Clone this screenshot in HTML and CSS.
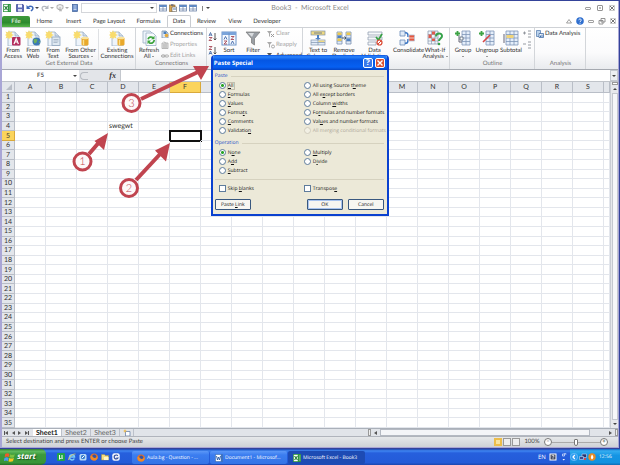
FILE: index.html
```html
<!DOCTYPE html>
<html lang="en">
<head>
<meta charset="utf-8">
<title>Book3 - Microsoft Excel</title>
<link rel="stylesheet" href="styles.css">
</head>
<body>
<svg class="defs" aria-hidden="true">
  <symbol id="page" viewBox="0 0 16 16"><path d="M3 2h7l4 4v10H3z" fill="#eef4fb" stroke="#9aaec4" stroke-width=".8"/><path d="M10 2v4h4" fill="#cfdcea" stroke="#9aaec4" stroke-width=".7"/><path d="M4 0l1 2.500 2.500-1-1 2.500L9 5 6.500 6l1 2.500-2.500-1L4 9.500 3 7.500.5 8.500l1-2.500L0 5l1.500-1-1-2.500 2.500 1z" fill="#f9dc6c"/></symbol>
  <symbol id="access" viewBox="0 0 16 16"><use href="#page"/><rect x="7" y="7" width="8.500" height="8.500" rx="1" fill="#b5305f"/><path d="M9 14l2.200-5.500 2.200 5.500M9.700 12h3" fill="none" stroke="#fff" stroke-width="1.200"/></symbol>
  <symbol id="web" viewBox="0 0 16 16"><use href="#page"/><circle cx="11.500" cy="11.500" r="4" fill="#3b78b5"/><path d="M9.500 8.500l3 1-1 3-2 1-1-3zM13.500 11.500l2 0-1 2z" fill="#6fb25c"/></symbol>
  <symbol id="text" viewBox="0 0 16 16"><use href="#page"/><rect x="7" y="7" width="8" height="8.500" fill="#dfe9f2" stroke="#8ea5bd" stroke-width=".8"/><path d="M8.500 9.500h5M8.500 11h5M8.500 12.500h4" stroke="#9aaabd" stroke-width=".7"/></symbol>
  <symbol id="drum" viewBox="0 0 16 16"><path d="M8.500 8v6.500c0 1.600 7 1.600 7 0V8" fill="#e9a92c"/><ellipse cx="12" cy="8" rx="3.500" ry="1.300" fill="#fbe39a"/><path d="M10.500 10v5" stroke="#fbe08a" stroke-width="1.400"/></symbol>
  <symbol id="other" viewBox="0 0 16 16"><use href="#page"/><use href="#drum"/></symbol>
  <symbol id="refresh" viewBox="0 0 16 16"><path d="M2 1h7l3 3v9H2z" fill="#eef4fb" stroke="#9aaec4" stroke-width=".8"/><path d="M5 3h7l3 3v9.500H5z" fill="#f7fafd" stroke="#9aaec4" stroke-width=".8"/><path d="M7 9.200a3.200 3.200 0 0 1 5-1.500M13.200 10a3.200 3.200 0 0 1-5.200 2.500" fill="none" stroke="#3ba33b" stroke-width="1.700"/><path d="M13.500 5.800v3.500h-3.500zM6.500 14v-3.500H10z" fill="#3ba33b"/></symbol>
  <symbol id="conn" viewBox="0 0 8 8"><path d="M1 1h4l2 2v5H1z" fill="#dce8f5" stroke="#7790ad" stroke-width=".8"/><path d="M2.500 1.500h3v2.500h-3z" fill="#4d80ba"/><circle cx="5.500" cy="5.500" r="1.800" fill="#e5a93a"/></symbol>
  <symbol id="props" viewBox="0 0 8 8"><path d="M1 2h6v5.500H1z" fill="#e4e4e4" stroke="#aaa" stroke-width=".8"/><path d="M2 4h4M2 6h4M3 .5l2 2" stroke="#999" stroke-width=".8"/></symbol>
  <symbol id="links" viewBox="0 0 8 8"><rect x=".5" y="3" width="3.500" height="2" rx="1" fill="none" stroke="#999"/><rect x="4" y="3" width="3.500" height="2" rx="1" fill="none" stroke="#aaa"/></symbol>
  <symbol id="az" viewBox="0 0 9 9"><path d="M1 4L2.500.5 4 4M1.500 3h2" fill="none" stroke="#466ba5" stroke-width=".9"/><path d="M1 5.500h3L1 8.500h3" fill="none" stroke="#a84a57" stroke-width=".9"/><path d="M7 1v7M5.700 6.500L7 8l1.300-1.500" fill="none" stroke="#444" stroke-width=".9"/></symbol>
  <symbol id="za" viewBox="0 0 9 9"><path d="M1 8.500L2.500 5 4 8.500M1.500 7.500h2" fill="none" stroke="#466ba5" stroke-width=".9"/><path d="M1 .5h3L1 3.500h3" fill="none" stroke="#a84a57" stroke-width=".9"/><path d="M7 1v7M5.700 6.500L7 8l1.300-1.500" fill="none" stroke="#444" stroke-width=".9"/></symbol>
  <symbol id="sort" viewBox="0 0 16 16"><rect x="1" y="2" width="14" height="13" fill="#f5f9fe" stroke="#6d94c9"/><path d="M1 2h14v3H1z" fill="#7ba4da"/><path d="M8 3v12" stroke="#6d94c9"/><path d="M3 9.500l1.500-3 1.500 3M10 14l1.500-3 1.500 3" fill="none" stroke="#4268a8" stroke-width=".9"/><path d="M10 6.500h3l-3 3h3M3 11h3l-3 3h3" fill="none" stroke="#a84a57" stroke-width=".9"/></symbol>
  <symbol id="funnel" viewBox="0 0 16 16"><path d="M1 2h14L9.500 8.500V15L6.500 13V8.500z" fill="#999ea4" stroke="#777" stroke-width=".7"/><path d="M3 3h6L7 7z" fill="#d8dbde"/></symbol>
  <symbol id="clear" viewBox="0 0 8 8"><path d="M0 1h5L3 3.500V7L2 6V3.500z" fill="#aaa"/><path d="M4 4l3 3M7 4L4 7" stroke="#999"/></symbol>
  <symbol id="reapply" viewBox="0 0 8 8"><path d="M0 1h5L3 3.500V7L2 6V3.500z" fill="#aaa"/><circle cx="6" cy="5.500" r="1.500" fill="none" stroke="#aaa"/></symbol>
  <symbol id="advanced" viewBox="0 0 8 8"><path d="M0 1h5L3 3.500V7L2 6V3.500z" fill="#555"/><path d="M5 7l2-3" stroke="#3c6cae"/></symbol>
  <symbol id="columns" viewBox="0 0 16 16"><rect x="1" y="1" width="14" height="4" fill="#efd981" stroke="#7f93ad" stroke-width=".7"/><path d="M4 3h8" stroke="#6d7f98"/><path d="M7 5h2v3h2L8 10 5 8h2z" fill="#4a7fc4"/><rect x="1" y="10" width="14" height="5" fill="#e2ecf8" stroke="#7f93ad" stroke-width=".7"/><path d="M1 12.500h14M8 10v5" stroke="#7f93ad" stroke-width=".7"/><path d="M8.500 10.500h6v1.500h-6z" fill="#efd981"/></symbol>
  <symbol id="remove" viewBox="0 0 16 16"><path d="M1 2h5v12H1zM10 2h5v12h-5z" fill="#e2ecf8" stroke="#7890b0" stroke-width=".8"/><path d="M1 5h5M1 8h5M1 11h5M10 5h5M10 8h5M10 11h5" stroke="#7890b0" stroke-width=".8"/><path d="M1.500 2.500h4V5h-4zM10.500 2.500h4V5h-4zM1.500 8.500h4V11h-4z" fill="#ecc94e"/><path d="M1.500 5.500h4V8h-4zM10.500 8.500h4V11h-4z" fill="#4f80c0"/><path d="M6 8h4M8.500 6.500L10 8 8.500 9.500" stroke="#456" fill="none"/></symbol>
  <symbol id="valid" viewBox="0 0 16 16"><path d="M1 2h14v3H1zM1 7h14v3H1zM1 12h8v3H1z" fill="#f6f8fa" stroke="#8697aa" stroke-width=".7"/><path d="M9 7l2.500 3L15 4" fill="none" stroke="#36a044" stroke-width="1.700"/><circle cx="12.500" cy="12.500" r="2.500" fill="#fff" stroke="#d9452f" stroke-width="1.200"/><path d="M11 14l3-3" stroke="#d9452f"/></symbol>
  <symbol id="consol" viewBox="0 0 16 16"><path d="M1 1h5v5H1zM1 10h5v5H1z" fill="#dfeaf7" stroke="#6b8cb8" stroke-width=".8"/><path d="M6 3c3-1 3 2 3 4M6 13c3 1 3-2 3-4" fill="none" stroke="#3a75c4" stroke-width="1.500"/><path d="M10 5h5.500v6H10z" fill="#e5573f" stroke="#b5c4d8" stroke-width=".8"/><path d="M10 8h5.500" stroke="#fff" stroke-width=".7"/></symbol>
  <symbol id="whatif" viewBox="0 0 16 16"><path d="M1 1h10v13H1z" fill="#f3f7fc" stroke="#8d9db3" stroke-width=".8"/><path d="M1 4.500h10M1 8h10M1 11h10M4.500 1v13M8 1v13" stroke="#8d9db3" stroke-width=".7"/><path d="M1.500 4.500h3V8h-3zM5 1.500h3v3H5zM5 8.500h3V11H5z" fill="#dd5c4c"/><path d="M9 6.500c0-4 6-4 6-.5 0 2.500-3 2.500-3 5" fill="none" stroke="#35a249" stroke-width="2"/><circle cx="12" cy="14" r="1.300" fill="#35a249"/></symbol>
  <symbol id="group" viewBox="0 0 16 16"><path d="M7 1h8v14H7z" fill="#e5eefa" stroke="#7d96b8" stroke-width=".8"/><path d="M7 4.500h8M7 8h8M7 11.500h8M11 1v14" stroke="#7d96b8" stroke-width=".8"/><path d="M4 5v7h3" fill="none" stroke="#667"/><path d="M0 3.500h5M2.500 1v5" stroke="#3da345" stroke-width="1.800"/><path d="M5 7h3v3H5z" fill="#fff" stroke="#567" stroke-width=".8"/></symbol>
  <symbol id="ungroup" viewBox="0 0 16 16"><path d="M7 1h8v14H7z" fill="#e5eefa" stroke="#7d96b8" stroke-width=".8"/><path d="M7 4.500h8M7 8h8M7 11.500h8M11 1v14" stroke="#7d96b8" stroke-width=".8"/><path d="M0 3.500h5M2.500 1v5" stroke="#3da345" stroke-width="1.800"/><path d="M4 12l7-7" stroke="#d74343" stroke-width="1.600"/></symbol>
  <symbol id="subtotal" viewBox="0 0 16 16"><path d="M3 1h12v14H3z" fill="#e5eefa" stroke="#7d96b8" stroke-width=".8"/><path d="M3 4.500h12M3 8h12M3 11.500h12M7 1v14M11 1v14" stroke="#7d96b8" stroke-width=".8"/><path d="M3.500 5h7v3h-7z" fill="#f0d47a"/><path d="M1 4v9" stroke="#667"/></symbol>
  <symbol id="detail" viewBox="0 0 8 8"><path d="M0 3h3M1.500 1.500v3M5 1h3M5 4h3M5 7h3" stroke="#8b9097" stroke-width=".9"/></symbol>
  <symbol id="hide" viewBox="0 0 8 8"><path d="M0 3h3M5 1h3M5 4h3M5 7h3" stroke="#8b9097" stroke-width=".9"/></symbol>
  <symbol id="analysis" viewBox="0 0 8 8"><path d="M.5.500h4v6h-4z" fill="#bcd3ec" stroke="#5d83b4" stroke-width=".8"/><path d="M3 3.500h4.500v4H3z" fill="#fff" stroke="#456fa6" stroke-width=".8"/><path d="M4.500 7V5.500M6 7V4.500" stroke="#3d6fb0"/></symbol>
  <symbol id="xl" viewBox="0 0 8 8"><rect width="8" height="8" rx=".6" fill="#2f9440"/><path d="M.8.800h4v6.400h-4z" fill="#fff"/><path d="M1.500 2l3 4M4.500 2l-3 4" stroke="#258036" stroke-width="1.200"/><path d="M6 2h1.500M6 4h1.500M6 6h1.500" stroke="#c9e7cc" stroke-width=".7"/></symbol>
  <symbol id="wd" viewBox="0 0 8 8"><rect width="8" height="8" rx=".6" fill="#3f73c0"/><path d="M.8.800h5v6.400h-5z" fill="#fff"/><path d="M1.500 2l1 4 1-3 1 3 1-4" fill="none" stroke="#285aa8" stroke-width=".9"/></symbol>
  <symbol id="save" viewBox="0 0 8 8"><path d="M.5.500h6.500l.5.500v6.500h-7z" fill="#5b69b8" stroke="#38458f" stroke-width=".7"/><path d="M2 .5h4v3H2z" fill="#f5f7ff"/><path d="M2 5h4v2.500H2z" fill="#cdd3e8"/></symbol>
  <symbol id="undo" viewBox="0 0 8 8"><path d="M2 3.500C5 1 8 3 6.500 5.500L5 7" fill="none" stroke="#3c68b8" stroke-width="1.500"/><path d="M.5 1v4h4z" fill="#3c68b8"/></symbol>
  <symbol id="redo" viewBox="0 0 8 8"><path d="M6 3.500C3 1 0 3 1.500 5.500L3 7" fill="none" stroke="#b5b9c0" stroke-width="1.300"/><path d="M7.500 1v4h-4z" fill="#b5b9c0"/></symbol>
  <symbol id="gear" viewBox="0 0 8 8"><path d="M4 .5l3 1v3L4 6 1 4.500v-3zM4 3v4.500M2 5l4 2" fill="#eee" stroke="#aaa" stroke-width=".9"/></symbol>
  <symbol id="book" viewBox="0 0 8 8"><rect x="1.500" y=".5" width="5" height="7" fill="#6388c6" stroke="#3d5e98" stroke-width=".7"/><path d="M2.500 2h3M2.500 4h3M2.500 5.500h3" stroke="#dfe9f7" stroke-width=".8"/></symbol>
  <symbol id="grid" viewBox="0 0 8 8"><rect x=".5" y="1" width="7" height="6" fill="#fff" stroke="#6b83a8" stroke-width=".8"/><path d="M.5 1h7v2h-7z" fill="#5e8bc8"/><path d="M4 1v6M.5 5h7" stroke="#6b83a8" stroke-width=".7"/></symbol>
  <symbol id="paste" viewBox="0 0 8 8"><rect x=".5" y="1" width="5.500" height="6.500" fill="#d6a453" stroke="#87672f" stroke-width=".6"/><path d="M2 .3h2.500v1.500H2z" fill="#667"/><path d="M3 3h4.500v4.700H3z" fill="#fff" stroke="#555" stroke-width=".6"/><path d="M4 5h3" stroke="#57a"/></symbol>
  <symbol id="newsheet" viewBox="0 0 8 8"><path d="M2.500 2.500H7v4.500H2.500z" fill="#fff" stroke="#6b83a8" stroke-width=".8"/><path d="M2 0l.6 1.400L4 2l-1.400.6L2 4l-.6-1.400L0 2l1.400-.6z" fill="#efb63c"/></symbol>
  <symbol id="winflag" viewBox="0 0 10 10"><path d="M1 2.500c1.500-1 2.500-.6 3.500 0L4 5c-1-.6-2-.6-3.500.200z" fill="#ef5a2b"/><path d="M5 2.700c1.200.6 2.400.6 4 0L8.300 5.200c-1.300.6-2.600.5-3.800 0z" fill="#7cc243"/><path d="M.4 5.800c1.400-.8 2.400-.7 3.500 0L3.200 8.500c-1-.7-2-.7-3.400 0z" fill="#4a9bf0"/><path d="M4.400 5.900c1.200.6 2.400.6 3.800 0L7.500 8.600c-1.200.5-2.500.6-3.800 0z" fill="#fbc61f"/></symbol>
  <symbol id="fox" viewBox="0 0 8 8"><circle cx="4" cy="4" r="3.600" fill="#e2702a"/><circle cx="4.200" cy="3.600" r="2" fill="#3154a8"/><path d="M.5 3c2-1 2 2 4 2s3-1 3-3c1 4-1 5.500-3.500 5.500S0 6 .5 3z" fill="#f08a27"/></symbol>
  <symbol id="ie" viewBox="0 0 8 8"><path d="M1.500 4h5C6.500 1 2 1 1.500 4s3.500 4 4.800 1.500" fill="none" stroke="#7ccaf7" stroke-width="1.500"/><path d="M.5 7C0 4.500 5 .5 7.500 1" fill="none" stroke="#f1c84b" stroke-width=".7"/></symbol>
  <symbol id="mu" viewBox="0 0 8 8"><rect width="8" height="8" rx="1" fill="#21a548"/><path d="M2.500 6.500V2M2.500 5c1 1 2.500.5 2.500-.5V2M5.200 5.300h.8" fill="none" stroke="#fff" stroke-width="1"/></symbol>
  <symbol id="globe" viewBox="0 0 8 8"><rect x=".5" y="1" width="7" height="6.500" rx="1.500" fill="#bcdcf7"/><circle cx="4" cy="4" r="2.200" fill="#3b7fd0"/><path d="M3 5l2.500-2.500" stroke="#fff"/></symbol>
  <symbol id="folder" viewBox="0 0 8 8"><path d="M.5 1.500h3l.7 1h3.300v4.500h-7z" fill="#f4dd80" stroke="#a98f3c" stroke-width=".5"/><path d="M3 4h4.500v3H3z" fill="#fff6c7"/></symbol>
  <symbol id="gee" viewBox="0 0 8 8"><rect x=".3" y=".3" width="7.400" height="7.400" rx="2" fill="#f3f6fb"/><path d="M5.800 2.800a2 2 0 1 0 0 2.400H4.300" fill="none" stroke="#344f9e" stroke-width="1.200"/></symbol>
  <symbol id="help-box" viewBox="0 0 8 8"><rect x=".5" y=".5" width="7" height="7" fill="#fff"/><rect x="1.500" y="1.500" width="5" height="5" fill="#444a60"/><path d="M3 3.200c0-1.300 2-1.200 2-.1 0 .7-1 .7-1 1.600M4 5.300v.7" fill="none" stroke="#fff" stroke-width=".8"/></symbol>
  <symbol id="dots" viewBox="0 0 8 8"><path d="M2.500 1h2v2h-2zM4 .3h1.800v1.500" fill="none" stroke="#dfe9ff" stroke-width=".7"/><path d="M2.500 6h2.500L3.700 7.500z" fill="#fff"/></symbol>
  <symbol id="chevron" viewBox="0 0 8 8"><circle cx="4" cy="4" r="3.700" fill="#2f9cf0" stroke="#8fd0ff" stroke-width=".5"/><path d="M4.800 2L3 4l1.800 2" fill="none" stroke="#fff" stroke-width="1.200"/></symbol>
  <symbol id="net" viewBox="0 0 8 8"><path d="M3 1h4.500v3.500H3z" fill="#26356f" stroke="#c5d5f3" stroke-width=".6"/><path d="M.5 3.500h4v3h-4z" fill="#3a4a92" stroke="#c5d5f3" stroke-width=".6"/><path d="M5 5l2 2M7 5L5 7" stroke="#d84a4a"/></symbol>
  <symbol id="flame" viewBox="0 0 8 8"><circle cx="4" cy="4" r="3.700" fill="#e98b22"/><path d="M4 1.500c2 2 1.500 4 0 5-1.500-1-1.500-3 0-5z" fill="#fff"/></symbol>
  <symbol id="min" viewBox="0 0 8 8"><rect x="1.500" y="3.500" width="5" height="2" rx=".5" fill="#fff" stroke="#888" stroke-width=".8"/></symbol>
  <symbol id="max" viewBox="0 0 8 8"><rect x="1.500" y="1.500" width="5" height="5" rx=".5" fill="#fff" stroke="#888" stroke-width=".9"/><rect x="3.300" y="3.300" width="1.400" height="1.400" fill="#777"/></symbol>
  <symbol id="restore" viewBox="0 0 8 8"><path d="M3 1.500h4v3.500H3zM1 3.500h4V7H1z" fill="#fff" stroke="#888" stroke-width=".9"/></symbol>
  <symbol id="close" viewBox="0 0 8 8"><path d="M1.500 1.500h5v5h-5z" fill="none" stroke="#aaa" stroke-width=".6"/><path d="M2 2l4 4M6 2L2 6" stroke="#777" stroke-width="1"/></symbol>
  <symbol id="caret" viewBox="0 0 8 8"><path d="M4 2.500L6.500 6h-5z" fill="#fff" stroke="#888" stroke-width=".8"/></symbol>
  <symbol id="help" viewBox="0 0 8 8"><circle cx="4" cy="4" r="3.800" fill="#2f6fcf"/><path d="M2.800 3.200c0-1.700 2.500-1.600 2.500-.1 0 .9-1.300.9-1.300 2" fill="none" stroke="#fff" stroke-width=".9"/><circle cx="4" cy="6.200" r=".5" fill="#fff"/></symbol>
</svg>

<main class="window">
  <header class="titlebar">
    <div class="quick">
      <button aria-label="Excel"><svg class="i8"><use href="#xl"/></svg></button>
      <button class="w-save" aria-label="Save"><svg class="i8"><use href="#save"/></svg></button>
      <button class="w-menu" aria-label="Undo"><svg class="i8"><use href="#undo"/></svg><i class="down"></i></button>
      <button class="w-menu" aria-label="Redo"><svg class="i8"><use href="#redo"/></svg><i class="down pale"></i></button>
      <button class="w-menu" aria-label="Trace"><svg class="i8"><use href="#gear"/></svg><i class="down pale"></i></button>
      <button aria-label="Calculator"><svg class="i8"><use href="#book"/></svg></button>
      <div class="quick-combo"><select aria-label="Style"><option></option></select><i class="down"></i></div>
      <button aria-label="Properties"><svg class="i8"><use href="#grid"/></svg></button>
      <button aria-label="Paste"><svg class="i8"><use href="#paste"/></svg></button>
      <button aria-label="Form"><svg class="i8"><use href="#grid"/></svg></button>
      <button aria-label="View"><svg class="i8"><use href="#grid"/></svg></button>
      <button class="w-more" aria-label="Customize"><i class="down"></i></button>
    </div>
    <h1>Book3 &nbsp;-&nbsp; Microsoft Excel</h1>
    <div class="winbtns">
      <button aria-label="Minimize"><svg class="i8"><use href="#min"/></svg></button>
      <button aria-label="Maximize"><svg class="i8"><use href="#max"/></svg></button>
      <button aria-label="Close"><svg class="i8"><use href="#close"/></svg></button>
    </div>
  </header>

  <nav class="tabs">
    <button class="file">File</button>
    <button class="t-home">Home</button>
    <button class="t-insert">Insert</button>
    <button class="t-layout">Page Layout</button>
    <button class="t-formulas">Formulas</button>
    <button class="t-data active">Data</button>
    <button class="t-review">Review</button>
    <button class="t-view">View</button>
    <button class="t-dev">Developer</button>
    <div class="docbtns">
      <button aria-label="Collapse ribbon"><svg class="i8"><use href="#caret"/></svg></button>
      <button aria-label="Help"><svg class="i8"><use href="#help"/></svg></button>
      <button aria-label="Minimize book"><svg class="i8"><use href="#min"/></svg></button>
      <button aria-label="Restore book"><svg class="i8"><use href="#restore"/></svg></button>
      <button aria-label="Close book"><svg class="i8"><use href="#close"/></svg></button>
    </div>
  </nav>

  <section class="ribbon">
    <div class="group">
      <div class="tools">
        <button class="big b20"><svg class="i16"><use href="#access"/></svg>From<br>Access</button>
        <button class="big b20"><svg class="i16"><use href="#web"/></svg>From<br>Web</button>
        <button class="big b20"><svg class="i16"><use href="#text"/></svg>From<br>Text</button>
        <button class="big b34"><svg class="i16"><use href="#other"/></svg>From Other<br><span>Sources <i class="down"></i></span></button>
        <button class="big b38 split"><svg class="i16"><use href="#other"/></svg>Existing<br>Connections</button>
      </div>
      <h2>Get External Data</h2>
    </div>
    <div class="group">
      <div class="tools">
        <button class="big b24"><svg class="i16"><use href="#refresh"/></svg>Refresh<br><span>All <i class="down"></i></span></button>
        <div class="list b46">
          <button><svg class="i8"><use href="#conn"/></svg>Connections</button>
          <button disabled><svg class="i8"><use href="#props"/></svg>Properties</button>
          <button disabled><svg class="i8"><use href="#links"/></svg>Edit Links</button>
        </div>
      </div>
      <h2>Connections</h2>
    </div>
    <div class="group">
      <div class="tools">
        <div class="list b12 sorts">
          <button aria-label="Sort A to Z"><svg class="i9"><use href="#az"/></svg></button>
          <button aria-label="Sort Z to A"><svg class="i9"><use href="#za"/></svg></button>
        </div>
        <button class="big b20"><svg class="i16"><use href="#sort"/></svg>Sort</button>
        <button class="big b28"><svg class="i16"><use href="#funnel"/></svg>Filter</button>
        <div class="list b34">
          <button disabled><svg class="i8"><use href="#clear"/></svg>Clear</button>
          <button disabled><svg class="i8"><use href="#reapply"/></svg>Reapply</button>
          <button><svg class="i8"><use href="#advanced"/></svg>Advanced</button>
        </div>
      </div>
    </div>
    <div class="group">
      <div class="tools">
        <button class="big b28"><svg class="i16"><use href="#columns"/></svg>Text to<br>Columns</button>
        <button class="big b24"><svg class="i16"><use href="#remove"/></svg>Remove<br>Duplicates</button>
        <button class="big b38"><svg class="i16"><use href="#valid"/></svg>Data<br>Validation</button>
        <button class="big b28"><svg class="i16"><use href="#consol"/></svg>Consolidate</button>
        <button class="big b34"><svg class="i16"><use href="#whatif"/></svg>What-If<br><span>Analysis <i class="down"></i></span></button>
      </div>
    </div>
    <div class="group">
      <div class="tools">
        <button class="big b24"><svg class="i16"><use href="#group"/></svg>Group<br><i class="down"></i></button>
        <button class="big b24"><svg class="i16"><use href="#ungroup"/></svg>Ungroup<br><i class="down"></i></button>
        <button class="big b24"><svg class="i16"><use href="#subtotal"/></svg>Subtotal</button>
        <div class="list b12">
          <button disabled aria-label="Show detail"><svg class="i8"><use href="#detail"/></svg></button>
          <button disabled aria-label="Hide detail"><svg class="i8"><use href="#hide"/></svg></button>
        </div>
      </div>
      <h2>Outline</h2>
    </div>
    <div class="group">
      <div class="tools">
        <div class="list b50">
          <button><svg class="i8"><use href="#analysis"/></svg>Data Analysis</button>
        </div>
      </div>
      <h2>Analysis</h2>
    </div>
  </section>

  <section class="formula">
    <button class="namebox">F5<i class="down"></i></button>
    <div class="fx"><i class="knob"></i><em>fx</em></div>
    <input aria-label="Formula">
    <button class="expand" aria-label="Expand formula bar"><i class="down"></i></button>
  </section>

  <section class="work">
    <table class="sheet" aria-label="Sheet1"><thead></thead><tbody></tbody></table>
    <div class="vscroll">
      <i class="splitter"></i>
      <button aria-label="Scroll up"><i class="up"></i></button>
      <div class="thumb"></div>
      <button class="last" aria-label="Scroll down"><i class="down"></i></button>
    </div>
  </section>

  <section class="sheets">
    <div class="sheet-nav">
      <button aria-label="First sheet"><i class="bar"></i><i class="left"></i></button>
      <button aria-label="Previous sheet"><i class="left"></i></button>
      <button aria-label="Next sheet"><i class="right"></i></button>
      <button aria-label="Last sheet"><i class="right"></i><i class="bar"></i></button>
    </div>
    <div class="sheet-tabs">
      <button class="active">Sheet1</button>
      <button>Sheet2</button>
      <button>Sheet3</button>
      <button class="new" aria-label="Insert sheet"><svg class="i8"><use href="#newsheet"/></svg></button>
    </div>
    <div class="hscroll">
      <i class="grip"></i>
      <button aria-label="Scroll left"><i class="left"></i></button>
      <div class="track"><div class="thumb"></div></div>
      <button aria-label="Scroll right"><i class="right"></i></button>
      <i class="grip"></i>
    </div>
  </section>

  <footer class="status">
    <span>Select destination and press ENTER or choose Paste</span>
    <div class="views">
      <button class="active" aria-label="Normal"></button>
      <button aria-label="Page layout"></button>
      <button aria-label="Page break"></button>
    </div>
    <span class="pct">100%</span>
    <button class="round" aria-label="Zoom out">−</button>
    <input class="zoom" type="range" aria-label="Zoom" value="50">
    <button class="round" aria-label="Zoom in">+</button>
  </footer>
</main>

<footer class="taskbar">
  <button class="start"><svg class="i12"><use href="#winflag"/></svg>start</button>
  <div class="launch">
    <button aria-label="uTorrent"><svg class="i8"><use href="#mu"/></svg></button>
    <button aria-label="Internet Explorer"><svg class="i8"><use href="#ie"/></svg></button>
    <button aria-label="Desktop"><svg class="i8"><use href="#globe"/></svg></button>
    <button aria-label="Firefox"><svg class="i8"><use href="#fox"/></svg></button>
    <button aria-label="Explorer"><svg class="i8"><use href="#folder"/></svg></button>
    <button aria-label="Media"><svg class="i8"><use href="#gee"/></svg></button>
  </div>
  <div class="tasks">
    <button><svg class="i8"><use href="#fox"/></svg>Aula.bg - Question - ...</button>
    <button><svg class="i8"><use href="#wd"/></svg>Document1 - Microsof...</button>
    <button class="active"><svg class="i8"><use href="#xl"/></svg>Microsoft Excel - Book3</button>
  </div>
  <div class="lang">EN <svg class="i8"><use href="#help-box"/></svg><svg class="i8"><use href="#dots"/></svg></div>
  <div class="tray"><svg class="i8"><use href="#chevron"/></svg><svg class="i8"><use href="#net"/></svg><svg class="i8"><use href="#flame"/></svg><time>12:56</time></div>
</footer>

<form class="dialog" role="dialog" aria-labelledby="dlg-title">
  <header>
    <h2 id="dlg-title">Paste Special</h2>
    <button type="button" class="ask" aria-label="Help">?</button>
    <button type="button" class="shut" aria-label="Close"><svg class="i8" viewBox="0 0 8 8"><path d="M1.500 1.500l5 5M6.500 1.500l-5 5" stroke="#fff" stroke-width="1.400"/></svg></button>
  </header>
  <div class="body">
    <h3>Paste</h3>
    <div class="options">
      <label><input type="radio" name="paste" checked><span class="focus"><u>A</u>ll</span></label>
      <label><input type="radio" name="paste"><span>All using Source t<u>h</u>eme</span></label>
      <label><input type="radio" name="paste"><span><u>F</u>ormulas</span></label>
      <label><input type="radio" name="paste"><span>All e<u>x</u>cept borders</span></label>
      <label><input type="radio" name="paste"><span><u>V</u>alues</span></label>
      <label><input type="radio" name="paste"><span>Column <u>w</u>idths</span></label>
      <label><input type="radio" name="paste"><span>Forma<u>t</u>s</span></label>
      <label><input type="radio" name="paste"><span>Fo<u>r</u>mulas and number formats</span></label>
      <label><input type="radio" name="paste"><span><u>C</u>omments</span></label>
      <label><input type="radio" name="paste"><span>Val<u>u</u>es and number formats</span></label>
      <label><input type="radio" name="paste"><span>Validatio<u>n</u></span></label>
      <label class="off"><input type="radio" name="paste" disabled><span>All mer<u>g</u>ing conditional formats</span></label>
    </div>
    <h3>Operation</h3>
    <div class="options">
      <label><input type="radio" name="op" checked><span>N<u>o</u>ne</span></label>
      <label><input type="radio" name="op"><span><u>M</u>ultiply</span></label>
      <label><input type="radio" name="op"><span>A<u>d</u>d</span></label>
      <label><input type="radio" name="op"><span>D<u>i</u>vide</span></label>
      <label><input type="radio" name="op"><span><u>S</u>ubtract</span></label>
    </div>
    <div class="options checks">
      <label><input type="checkbox"><span>Skip <u>b</u>lanks</span></label>
      <label><input type="checkbox"><span>Transpos<u>e</u></span></label>
    </div>
    <div class="actions">
      <button type="button">Paste <u>L</u>ink</button>
      <button type="button" class="ok">OK</button>
      <button type="button">Cancel</button>
    </div>
  </div>
</form>

<svg class="notes" viewBox="0 0 620 465" aria-label="Steps">
  <g fill="#c0444f" stroke="#c0444f">
    <path d="M89 154l12-14M136 180l26-28M141 99l57-27" stroke-width="4"/>
    <path d="M108 133l-13.500 8 9.500 9zM170 143l-15 7.500 11 11zM209 66h-16l8 14z" stroke="none"/>
  </g>
  <g fill="#fdf8f8" stroke="#c0444f" stroke-width="3">
    <circle cx="82.500" cy="161.500" r="8.500"/><circle cx="129" cy="188" r="8.500"/><circle cx="131.500" cy="103" r="8.500"/>
  </g>
  <g class="num"><text x="82.500" y="165">1</text><text x="129" y="192">2</text><text x="131.500" y="107">3</text></g>
</svg>
<script src="sheet.js"></script>
</body>
</html>
```
FILE: styles.css
```css
* { box-sizing: border-box; }
body {
  margin: 0;
  height: 100vh;
  display: flex;
  flex-direction: column;
  overflow: hidden;
  position: relative;
  background: #34439a;
  font: 6px/6px Lato, "Open Sans", sans-serif;
  text-rendering: geometricPrecision;
  font-variant-ligatures: none;
  color: #333;
}
button, input, select { font: inherit; color: inherit; margin: 0; padding: 0; border: 0; background: none; border-radius: 0; text-rendering: inherit; }
button { display: flex; align-items: center; justify-content: center; white-space: nowrap; }
h1, h2, h3 { margin: 0; font-size: inherit; font-weight: normal; }
svg { flex: none; display: block; }
.defs { position: absolute; width: 0; height: 0; }
.i8 { width: 8px; height: 8px; }
.i9 { width: 9px; height: 9px; }
.i12 { width: 12px; height: 12px; }
.i16 { width: 16px; height: 16px; }

.down, .up, .left, .right { display: inline-block; flex: none; border: 2px solid transparent; }
.down { border-top-color: #444; border-bottom: 0; }
.up { border-bottom-color: #444; border-top: 0; }
.left { border-right: 3px solid #555; border-left: 0; }
.right { border-left: 3px solid #555; border-right: 0; }
.bar { width: 1px; height: 4px; background: #555; }
.pale { border-top-color: #aaa; }

.window {
  flex: 1;
  min-height: 0;
  display: flex;
  flex-direction: column;
  margin: 1px 1px 1px 0;
  border: 0 solid #a9a6d6;
  border-width: 0 1px 1px 2px;
  background: #fff;
}

.titlebar { position: relative; display: flex; align-items: center; justify-content: space-between; height: 14px; }
.quick { display: flex; align-items: center; gap: 2px; padding-left: 1px; }
.w-save { margin-left: 3px; }
.w-menu { gap: 1px; width: 13px; }
.quick-combo { display: flex; align-items: center; width: 76px; height: 10px; padding-right: 2px; border: 1px solid #d4d6da; background: #fff; }
.quick-combo select { appearance: none; flex: 1; min-width: 0; }
.w-more { width: 10px; border-left: 1px solid #888; height: 5px; margin-left: 3px; }
.titlebar h1 { position: absolute; left: 0; right: 0; text-align: center; font-size: 7px; color: #8a8a8a; pointer-events: none; }
.winbtns { display: flex; gap: 4px; padding-right: 2px; }

.tabs { display: flex; align-items: flex-end; height: 12px; }
.tabs > button { height: 11px; }
.file { width: 28px; background: linear-gradient(#3f9a3c, #2c8a2f 60%, #56b548); color: #fff; border-radius: 2px 2px 0 0; }
.t-home, .t-insert { width: 29px; }
.t-layout { width: 42px; }
.t-formulas { width: 37px; }
.t-data { width: 24px; }
.t-review { width: 31px; }
.t-view { width: 26px; }
.t-dev { width: 38px; }
.tabs .active { height: 12px; border: 1px solid #c9ccd1; border-bottom: 0; border-radius: 2px 2px 0 0; background: #fff; }
.docbtns { display: flex; gap: 3px; margin-left: auto; align-self: center; padding-right: 1px; }

.ribbon {
  display: flex;
  height: 43px;
  border-top: 1px solid #cfd2d6;
  border-bottom: 1px solid #a5a9b0;
  background: linear-gradient(#fff, #fbfbfc 60%, #e9ebee);
}
.group { display: flex; flex-direction: column; border-right: 1px solid #d3d6da; padding: 1px 0 1px 1px; }
.tools { display: flex; flex: 1; align-items: flex-start; }
.tools > * { flex: none; }
.group h2 { text-align: center; color: #777; line-height: 8px; }
.big { display: block; text-align: center; line-height: 6px; padding-top: 1px; }
.big svg { margin: 0 auto 2px; }
.big .down { vertical-align: middle; border-width: 1px; border-bottom: 0; }
.split { border-left: 1px solid #dfe1e4; }
.b12 { width: 11px; }
.b20 { width: 20px; }
.b24 { width: 24px; }
.b28 { width: 28px; }
.b34 { width: 35px; }
.b38 { width: 37px; }
.b46 { width: 45px; }
.b50 { width: 49px; }
.b38 + .b28 + .b34 { width: 28px; }
.list { display: flex; flex-direction: column; gap: 3px; align-items: flex-start; padding-top: 1px; }
.list button { gap: 1px; }
.list button:disabled { color: #a5a5a5; }
.sorts { gap: 5px; padding-top: 3px; }

.formula { display: flex; height: 12px; background: #fff; border-bottom: 1px solid #bfc3c9; }
.namebox { position: relative; width: 77px; color: #222; }
.namebox .down { position: absolute; right: 2px; top: 5px; }
.fx { display: flex; align-items: center; justify-content: space-between; width: 42px; padding: 0 4px 0 1px; background: #e3e5e9; border-right: 1px solid #c4c8ce; }
.knob { width: 8px; height: 8px; border: 1px solid #b7bbc2; border-right: 0; border-radius: 5px 0 0 5px; }
.fx em { font: italic bold 8px/8px "Liberation Serif", serif; color: #333; }
.formula input { flex: 1; min-width: 0; }
.expand { width: 8px; background: #eceef1; border: 1px solid #c4c8ce; }

.work { display: flex; flex: 1; min-height: 0; }
.sheet { flex: 1; min-width: 0; display: flex; flex-direction: column; overflow: hidden; font-size: 7px; line-height: 8px; color: #333; }
.sheet tr { display: grid; grid-template-columns: 13px repeat(19, 31px) 1fr; min-height: 0; }
.sheet thead { display: block; }
.sheet thead tr { height: 11px; }
.sheet tbody { flex: 1; min-height: 0; display: grid; grid-auto-rows: minmax(0, 1fr); }
.sheet th, .sheet td { padding: 0; min-width: 0; font-weight: normal; border-right: 1px solid #e3e6ec; border-bottom: 1px solid #e3e6ec; display: flex; align-items: center; justify-content: center; white-space: nowrap; }
.sheet td { justify-content: flex-start; padding-left: 1px; overflow: visible; }
.sheet th { background: #e3e6eb; border-color: #b9bec7; overflow: hidden; }
.sheet .corner { justify-content: flex-end; align-items: flex-end; padding: 2px; }
.corner i { border: 3px solid #b8bdc6; border-top-color: transparent; border-left-color: transparent; }
.sheet .hot { background: #fbd45c; border-color: #d9a93b; }
.sheet .cursor { outline: 2px solid #111; outline-offset: -1px; }

.vscroll { display: flex; flex-direction: column; align-items: center; width: 8px; background: #e6e8ec; border-left: 1px solid #c9cdd4; }
.vscroll button { width: 7px; height: 8px; }
.vscroll .thumb { width: 6px; flex: 1; background: #f6f7f9; border: 1px solid #c4c8cf; }
.splitter { width: 6px; height: 3px; border: 1px solid #999; background: #fff; }

.sheets { display: flex; height: 8px; background: #e1e4e9; border-top: 1px solid #aab0b9; }
.sheet-nav { display: flex; width: 29px; justify-content: space-around; }
.sheet-tabs { display: flex; padding-left: 2px; font-size: 7px; }
.sheet-tabs button { width: 29px; border-right: 1px solid #bcc1ca; color: #666; }
.sheet-tabs .active { background: #fff; color: #222; font-weight: bold; }
.sheet-tabs .new { width: 14px; }
.hscroll { display: flex; align-items: center; width: 250px; margin-left: auto; }
.hscroll button { width: 9px; }
.track { flex: 1; display: flex; }
.track .thumb { width: 93%; height: 7px; background: #f4f5f8; border: 1px solid #b4b9c2; }
.grip { width: 3px; height: 7px; border: 1px solid #999; background: #eee; }

.status { display: flex; align-items: center; height: 11px; padding: 0 10px 0 4px; border-top: 1px solid #b0b4bc; background: linear-gradient(#e6e8ea, #cfd2d6); color: #444; }
.views { display: flex; gap: 1px; margin-left: auto; }
.views button { width: 8px; height: 8px; border: 1px solid #999; background: #eee; }
.views .active { border: 2px solid #ecbd4b; background: #f8e3a1; }
.pct { width: 24px; text-align: center; }
.round { width: 8px; height: 8px; border: 1px solid #777; border-radius: 50%; background: #fff; }
.zoom { appearance: none; width: 48px; height: 8px; background: linear-gradient(#aaa, #aaa) center / 100% 1px no-repeat; }
.zoom::-webkit-slider-thumb { appearance: none; width: 4px; height: 7px; background: #fff; border: 1px solid #777; border-radius: 1px 1px 2px 2px; }

.taskbar { display: flex; height: 16px; background: linear-gradient(#1f46b0, #3f86f2 12%, #265fdd 25%, #235bd8 85%, #1b46ad); color: #fff; font: 5px/6px "Open Sans", sans-serif; }
.start { width: 46px; gap: 1px; padding-right: 6px; border-radius: 0 5px 5px 0; background: linear-gradient(#2e7d2e, #5fba5f 14%, #3c9a3c 35%, #389638 85%, #276e27); font: italic bold 8px/10px "Open Sans", sans-serif; text-shadow: 1px 1px 1px #1d4f1d; }
.launch { display: flex; gap: 3px; align-items: center; width: 86px; padding-left: 11px; }
.tasks { display: flex; flex: 1; gap: 1px; padding: 2px 0 1px; }
.tasks button { width: 77px; justify-content: flex-start; gap: 2px; padding-left: 5px; border-radius: 2px; background: linear-gradient(#5c98f7, #3b7df0 30%, #3474e6); }
.tasks button.active { background: #1d4bb4; }
.lang { display: flex; align-items: center; gap: 3px; width: 32px; font-size: 6px; }
.tray { display: flex; align-items: center; gap: 1px; width: 50px; background: linear-gradient(#1468c4, #35adf0 12%, #1595e4 40%, #1292e0 85%, #0f6cb4); }
.tray time { margin-left: 2px; }

.dialog { position: absolute; left: 34%; top: 55px; width: 178px; border: 2px solid #0a41cf; border-top: 0; border-radius: 4px 4px 0 0; background: #ece9d8; color: #111; overflow: hidden; font: 5px/6px "Open Sans", sans-serif; }
.dialog header { display: flex; align-items: center; gap: 2px; height: 15px; padding: 0 2px 0 1px; background: linear-gradient(#0a52e0, #2a83fb 12%, #0556e3 35%, #0660f2 80%, #0443c4); color: #fff; }
.dialog header h2 { flex: 1; font: bold 6px/8px "Open Sans", sans-serif; }
.dialog header button { width: 10px; height: 10px; border: 1px solid #fff; border-radius: 2px; background: #3a78ea; font: bold 8px/8px "Open Sans", sans-serif; }
.dialog header .shut { background: #dd5130; }
.body { padding: 2px 3px 4px 2px; }
.body h3 { display: flex; align-items: center; gap: 3px; color: #1f49c4; line-height: 8px; margin-bottom: 1px; }
.body h3::after { content: ""; flex: 1; border-top: 1px solid #d6d2bf; }
.options { display: grid; grid-template-columns: 85px 1fr; padding: 0 0 4px 4px; }
.options label { display: flex; align-items: center; gap: 2px; height: 9px; white-space: nowrap; }
.options input { appearance: none; flex: none; width: 7px; height: 7px; border: 1px solid #5e7c9c; border-radius: 50%; background: #fff; }
.options input:checked { background: radial-gradient(circle, #28a428 0 1px, #fff 2px); }
.options input[type="checkbox"] { border-radius: 0; }
.off { color: #aca899; }
.options .off input { border-color: #d1cdbd; background: #f2f0e4; }
.focus { outline: 1px solid #c2bfae; }
.options.checks { border-top: 1px solid #d6d2bf; padding: 4px 0 6px 4px; }
.actions { display: flex; gap: 5px; }
.actions button { display: block; width: 36px; height: 11px; border: 1px solid #39587f; border-radius: 1px; background: #f7f6f1; }
.actions .ok { margin-left: auto; box-shadow: inset 0 0 0 1px #a9c4ef; }

.notes { position: absolute; left: 0; top: 0; width: 620px; height: 465px; pointer-events: none; }
.num { font: 300 11px Lato, sans-serif; fill: #c0444f; text-anchor: middle; }
```
FILE: sheet.js
```js
// Builds the worksheet: columns A to S plus a cut-off one, rows 1 to 35.
const letters = [..."ABCDEFGHIJKLMNOPQRS", ""];
const values = { D4: "swegwt" };
const selected = { col: "F", row: 5 };

const head = document.createElement("tr");
head.innerHTML = '<th class="corner"><i></i></th>' + letters
  .map(c => `<th${c === selected.col ? ' class="hot"' : ""}>${c}</th>`).join("");
document.querySelector(".sheet thead").append(head);

const body = document.querySelector(".sheet tbody");
for (let r = 1; r <= 35; r++) {
  const tr = document.createElement("tr");
  const hot = r === selected.row;
  tr.innerHTML = `<th${hot ? ' class="hot"' : ""}>${r}</th>` + letters
    .map(c => `<td${hot && c === selected.col ? ' class="cursor"' : ""}>${values[c + r] || ""}</td>`).join("");
  body.append(tr);
}
```
